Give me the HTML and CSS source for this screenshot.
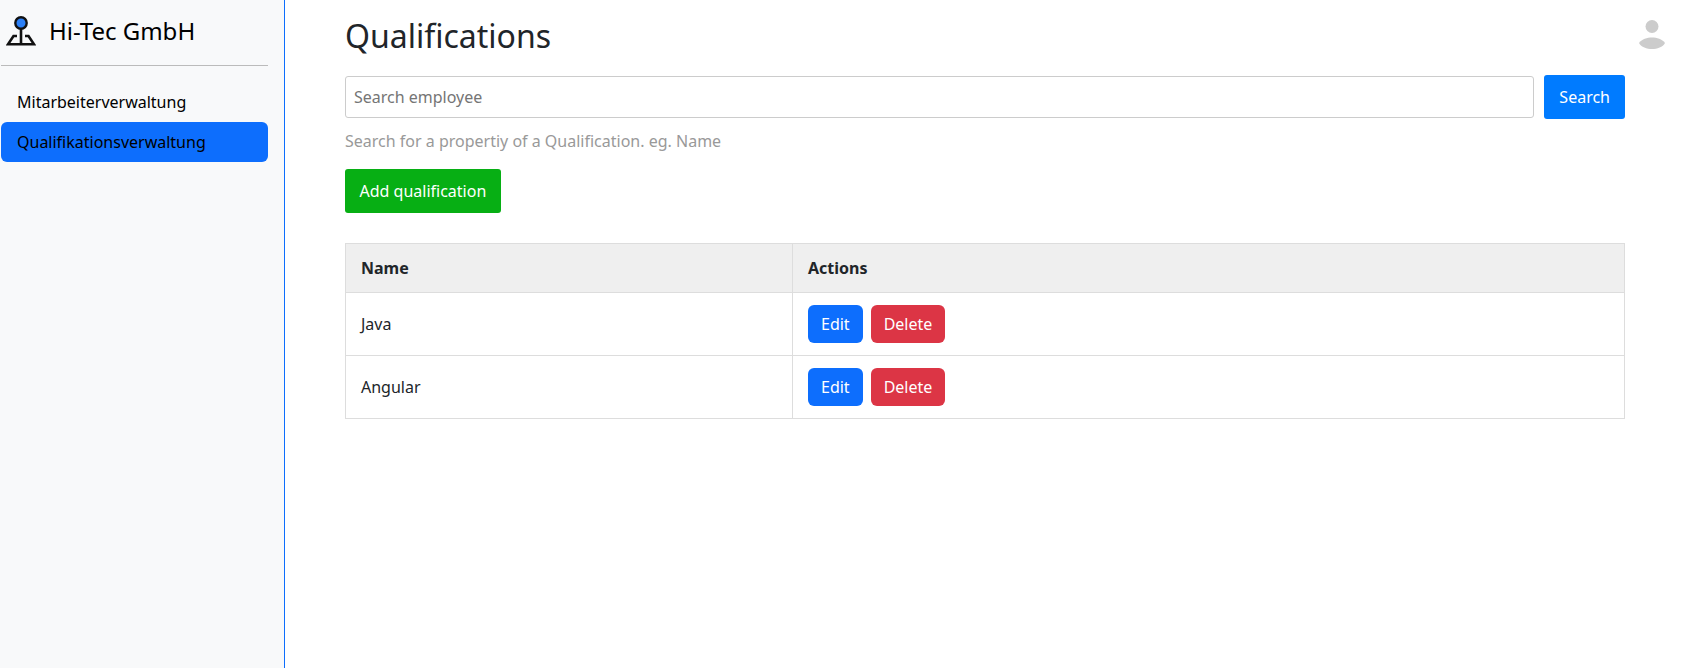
FILE: index.html
```html
<!DOCTYPE html>
<html lang="en">
<head>
<meta charset="utf-8">
<title>Qualifications</title>
<link rel="stylesheet" href="styles.css">
</head>
<body>
<div class="app">
  <aside class="sidebar">
    <div class="brand">
      <svg class="logo" viewBox="0 0 30 30" width="30" height="30" aria-hidden="true">
        <circle cx="15" cy="7" r="5.700" fill="#2b7ff5" stroke="#111" stroke-width="2.400"/>
        <path d="M15 12V28" fill="none" stroke="#111" stroke-width="2.600"/>
        <path d="M11 20H7.500L2 28.300H28L22.500 20H19" fill="none" stroke="#111" stroke-width="2.600"/>
      </svg>
      <span class="brand-name">Hi-Tec GmbH</span>
    </div>
    <nav class="nav">
      <a class="nav-link">Mitarbeiterverwaltung</a>
      <a class="nav-link active">Qualifikationsverwaltung</a>
    </nav>
  </aside>
  <main class="main">
    <h1 class="title">Qualifications</h1>
    <form class="search-row">
      <input class="search-input" type="text" placeholder="Search employee">
      <button class="btn btn-search" type="button">Search</button>
    </form>
    <p class="hint">Search for a propertiy of a Qualification. eg. Name</p>
    <button class="btn btn-add" type="button">Add qualification</button>
    <table class="table">
      <thead>
        <tr><th class="col-name">Name</th><th>Actions</th></tr>
      </thead>
      <tbody>
        <tr>
          <td>Java</td>
          <td><div class="actions"><button class="btn-sm btn-edit" type="button">Edit</button><button class="btn-sm btn-delete" type="button">Delete</button></div></td>
        </tr>
        <tr>
          <td>Angular</td>
          <td><div class="actions"><button class="btn-sm btn-edit" type="button">Edit</button><button class="btn-sm btn-delete" type="button">Delete</button></div></td>
        </tr>
      </tbody>
    </table>
  </main>
  <div class="user">
    <svg viewBox="0 0 26 29" width="26" height="29" aria-hidden="true">
      <circle cx="13" cy="6.500" r="6.500" fill="#ccc"/>
      <path d="M0 23C3 19 8 17.500 13 17.500S23 19 26 23C24 27 18 29 13 29S2 27 0 23Z" fill="#ccc"/>
    </svg>
  </div>
</div>
</body>
</html>
```
FILE: styles.css
```css
* { box-sizing: border-box; }
html, body { margin: 0; height: 100%; }
body {
  font-family: "Noto Sans", sans-serif;
  font-size: 16px;
  line-height: 24px;
  color: #212529;
  background: #fff;
}
.app { display: flex; height: 668px; position: relative; overflow: hidden; }
.sidebar {
  width: 285px;
  flex: none;
  background: #f8f9fa;
  border-right: 1px solid #0d6efd;
  padding: 0 16px 0 1px;
}
.brand {
  display: flex;
  align-items: center;
  gap: 13px;
  height: 66px;
  padding: 0 0 3px 5px;
  border-bottom: 1px solid #bbb;
  color: #000;
}
.logo { flex: none; }
.brand-name { font-size: 24px; line-height: 32px; }
.nav { display: flex; flex-direction: column; padding-top: 16px; }
.nav-link {
  display: block;
  height: 40px;
  padding: 8px 16px;
  color: #000;
  border-radius: 6px;
}
.nav-link.active { background: #0d6efd; }
.main { flex: none; width: 1280px; margin-left: 60px; padding-top: 12px; }
.title { margin: 0 0 15px; font-size: 32px; line-height: 48px; font-weight: 400; }
.search-row { display: flex; align-items: center; gap: 10px; }
.search-input {
  flex: 1;
  height: 42px;
  padding: 0 8px;
  font: inherit;
  border: 1px solid #ccc;
  border-radius: 3px;
  outline: none;
}
.search-input::placeholder { color: #757575; opacity: 1; }
.btn {
  display: block;
  height: 44px;
  padding: 0 15px;
  font: inherit;
  color: #fff;
  border: none;
  border-radius: 3px;
}
.btn-search { background: #007bff; }
.hint { margin: 10px 0 16px; color: #999; line-height: 24px; }
.btn-add { background: #07af14; padding: 0 14.500px; }
.table {
  width: 100%;
  margin-top: 30px;
  border-collapse: collapse;
  table-layout: fixed;
}
.table th, .table td {
  border: 1px solid #ddd;
  padding: 12px 15px;
  text-align: left;
  vertical-align: middle;
}
.table th { background: #efefef; font-weight: 700; }
.col-name { width: 447px; }
.actions { display: flex; gap: 8px; }
.btn-sm {
  height: 38px;
  padding: 0 13px;
  font: inherit;
  color: #fff;
  border: none;
  border-radius: 6px;
}
.btn-edit { background: #0d6efd; }
.btn-delete { background: #dc3545; }
.user { position: absolute; top: 20px; right: 31px; line-height: 0; }
```
